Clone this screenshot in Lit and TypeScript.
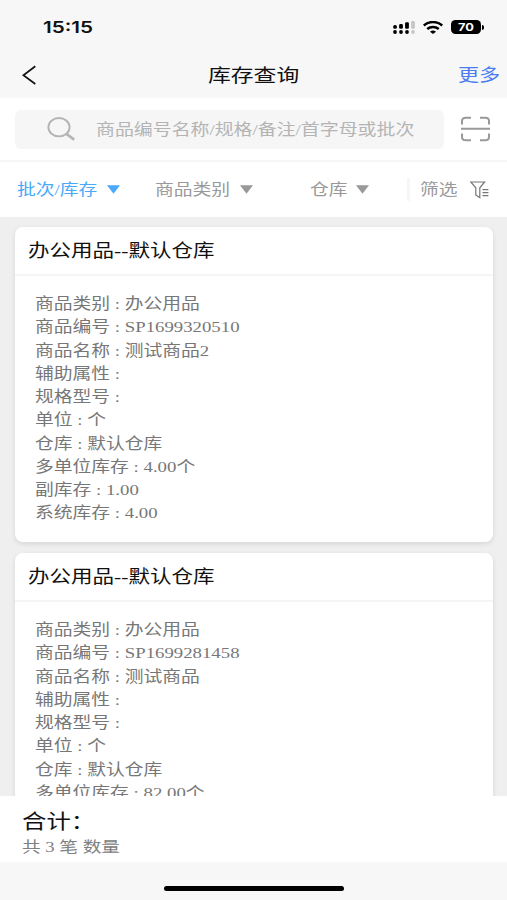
import { LitElement, html, css, svg } from "lit";
import { customElement, property } from "lit/decorators.js";

type Field = [label: string, value: string];
interface Stock {
  title: string;
  fields: Field[];
}

const STOCKS: Stock[] = [
  {
    title: "办公用品--默认仓库",
    fields: [
      ["商品类别", "办公用品"],
      ["商品编号", "SP1699320510"],
      ["商品名称", "测试商品2"],
      ["辅助属性", ""],
      ["规格型号", ""],
      ["单位", "个"],
      ["仓库", "默认仓库"],
      ["多单位库存", "4.00个"],
      ["副库存", "1.00"],
      ["系统库存", "4.00"],
    ],
  },
  {
    title: "办公用品--默认仓库",
    fields: [
      ["商品类别", "办公用品"],
      ["商品编号", "SP1699281458"],
      ["商品名称", "测试商品"],
      ["辅助属性", ""],
      ["规格型号", ""],
      ["单位", "个"],
      ["仓库", "默认仓库"],
      ["多单位库存", "82.00个"],
    ],
  },
];

// Text is set wide: every label is stretched horizontally from its left edge.
const wide = css`
  .wide {
    display: inline-block;
    white-space: nowrap;
    transform: scaleX(1.22);
    transform-origin: left center;
  }
`;

@customElement("stock-card")
export class StockCard extends LitElement {
  @property({ attribute: false }) stock!: Stock;

  static styles = [
    wide,
    css`
      :host {
        display: block;
        flex: none;
        height: 315px;
        background: #fff;
        border-radius: 8px;
        box-shadow: 0 2px 5px rgba(0, 0, 0, 0.1);
      }
      .title {
        height: 46px;
        line-height: 46px;
        padding: 1px 0 0 13px;
        border-bottom: 2px solid #f5f5f5;
        font-size: 17.65px;
        color: #111;
      }
      .fields {
        padding: 16px 0 0 20px;
        font-size: 15.4px;
        color: #777;
      }
      .row {
        height: 23.28px;
        line-height: 23.28px;
      }
    `,
  ];

  render() {
    return html`
      <div class="title"><span class="wide">${this.stock.title}</span></div>
      <div class="fields">
        ${this.stock.fields.map(
          ([label, value]) =>
            html`<div class="row"><span class="wide">${label} : ${value}</span></div>`
        )}
      </div>
    `;
  }
}

const cellular = svg`
  <g fill="#000">
    <circle cx="2" cy="11" r="1.9"/><circle cx="8" cy="11" r="1.9"/><circle cx="14" cy="11" r="1.9"/>
    <rect x="0.2" y="4" width="3.7" height="3.8" rx="1.6"/>
    <rect x="6.1" y="3" width="3.8" height="4.8" rx="1.4"/>
    <rect x="12.1" y="1.2" width="3.8" height="6.6" rx="1.2"/>
  </g>
  <g fill="#c6c6c6"><circle cx="20" cy="11" r="1.9"/><rect x="18.1" y="0" width="3.8" height="7.8" rx="1.2"/></g>`;

@customElement("app-root")
export class AppRoot extends LitElement {
  static styles = [
    wide,
    css`
      :host {
        display: flex;
        flex-direction: column;
        width: 507px;
        height: 900px;
        overflow: hidden;
        background: #efefef;
        font-family: "Liberation Serif", "Noto Sans CJK SC", serif;
      }
      svg {
        display: block;
        flex: none;
      }
      .status {
        flex: none;
        display: flex;
        align-items: center;
        height: 54px;
        padding: 0 23px 0 43px;
        background: #f7f7f7;
      }
      .clock {
        flex: 1;
        font: 600 16.4px/54px Inter, sans-serif;
        color: #111;
      }
      .clock .wide {
        transform: scaleX(1.26);
      }
      .icons {
        display: flex;
        align-items: center;
        gap: 8px;
      }
      .battery {
        display: flex;
        align-items: center;
        gap: 1px;
      }
      .cell {
        width: 30px;
        height: 14px;
        border-radius: 4.5px;
        background: #000;
        color: #fff;
        text-align: center;
        font: 700 10.5px/15px Inter, sans-serif;
      }
      .cell .wide {
        display: block;
        transform-origin: center;
      }
      .tip {
        width: 2px;
        height: 5px;
        border-radius: 0 2px 2px 0;
        background: #000;
      }
      .nav {
        flex: none;
        display: flex;
        align-items: center;
        height: 43px;
        padding: 0 0 1px 22px;
        background: #f7f7f7;
        line-height: 39px;
      }
      .nav svg {
        margin-bottom: 1px;
      }
      .nav .heading {
        width: 250px;
        padding-left: 171px;
        font-size: 18.7px;
        color: #111;
      }
      .nav .more {
        font-size: 17.3px;
        color: #4a7df0;
      }
      .search {
        flex: none;
        display: flex;
        align-items: center;
        gap: 16px;
        height: 62px;
        padding-left: 15px;
        background: #fff;
        border-bottom: 2px solid #f6f6f6;
      }
      .box {
        display: flex;
        align-items: center;
        gap: 20.5px;
        width: 397.5px;
        height: 39px;
        padding-left: 31.5px;
        border-radius: 6px;
        background: #f6f6f6;
        font-size: 15.5px;
        line-height: 39px;
        color: #b4b4b4;
      }
      .filters {
        flex: none;
        display: grid;
        grid-template-columns: 138px 155px 97px 1fr;
        align-items: center;
        height: 55px;
        padding-left: 17px;
        background: #fff;
        font-size: 15.4px;
        line-height: 55px;
        color: #999;
      }
      .filter {
        display: flex;
        align-items: center;
      }
      .active {
        color: #4aa9f8;
      }
      .word5 {
        width: 90px;
      }
      .word4 {
        width: 85px;
      }
      .word2 {
        width: 46px;
      }
      .last {
        border-left: 3px solid #f6f6f6;
        height: 23px;
        line-height: 23px;
        padding-left: 10px;
      }
      .last .word2 {
        width: 50px;
      }
      .list {
        flex: 1;
        min-height: 0;
        overflow: hidden;
        display: flex;
        flex-direction: column;
        gap: 11px;
        padding: 10px 14px 0 14.5px;
      }
      .total {
        flex: none;
        height: 66px;
        padding-left: 21.5px;
        background: #fff;
      }
      .sum {
        padding-top: 11px;
        line-height: 30px;
        font-size: 20px;
        color: #111;
      }
      .count {
        line-height: 20px;
        font-size: 15.3px;
        color: #808080;
      }
      .home {
        flex: none;
        display: flex;
        justify-content: center;
        height: 38px;
        background: #f7f7f7;
      }
      .bar {
        width: 180px;
        height: 5.4px;
        margin: 24px 0 0 1px;
        border-radius: 3px;
        background: #000;
      }
    `,
  ];

  private arrow() {
    return html`<svg width="13" height="9" viewBox="0 0 13 9"><path d="M0 .3H13L6.5 8.7Z" fill="currentColor" /></svg>`;
  }

  render() {
    return html`
      <div class="status">
        <div class="clock"><span class="wide">15:15</span></div>
        <div class="icons">
          <svg width="22" height="13" viewBox="0 0 22 13">${cellular}</svg>
          <svg width="20" height="13" viewBox="0 0 20 13" fill="none" stroke="#000" stroke-width="2.5">
            <path d="M.8 4.5C6-.1 14-.1 19.2 4.5" />
            <path d="M4.2 8C7.5 5.2 12.5 5.2 15.8 8" />
            <path d="M7 10.7Q10 8.5 13 10.7L10 13Z" fill="#000" stroke="none" />
          </svg>
          <div class="battery">
            <div class="cell"><span class="wide">70</span></div>
            <div class="tip"></div>
          </div>
        </div>
      </div>
      <div class="nav">
        <svg width="15" height="20" viewBox="0 0 15 20" fill="none" stroke="#111" stroke-width="1.7">
          <path d="M13.3 1.3L1.4 10.3L13.3 19" />
        </svg>
        <div class="heading"><span class="wide">库存查询</span></div>
        <div class="more"><span class="wide">更多</span></div>
      </div>
      <div class="search">
        <div class="box">
          <svg width="29" height="24" viewBox="0 0 29 24" fill="none" stroke="#b4b4b4">
            <ellipse cx="12" cy="10.2" rx="10.6" ry="9.2" stroke-width="1.9" />
            <path d="M19 16.6L27.2 22.6" stroke-width="2.6" />
          </svg>
          <span class="wide">商品编号名称/规格/备注/首字母或批次</span>
        </div>
        <svg width="31" height="26" viewBox="0 0 31 26" fill="none" stroke="#999" stroke-width="2">
          <path d="M2 8.5V5Q2 1.7 6 1.7H11M20 1.7H25Q29 1.7 29 5V8.5M2 17.5V21Q2 24.3 6 24.3H11M20 24.3H25Q29 24.3 29 21V17.5M1 12.8H30" />
        </svg>
      </div>
      <div class="filters">
        <div class="filter active"><div class="word5"><span class="wide">批次/库存</span></div>${this.arrow()}</div>
        <div class="filter"><div class="word4"><span class="wide">商品类别</span></div>${this.arrow()}</div>
        <div class="filter"><div class="word2"><span class="wide">仓库</span></div>${this.arrow()}</div>
        <div class="filter last">
          <div class="word2"><span class="wide">筛选</span></div>
          <svg width="20" height="18" viewBox="0 0 20 18" fill="none" stroke="#777" stroke-width="1.2">
            <path d="M.8 1H14.6L9.8 6.8V16.6L5.8 14V6.8Z" />
            <path d="M12.5 8.6H18.4M12.5 11.6H18.4M12.5 14.6H18.4" />
          </svg>
        </div>
      </div>
      <div class="list">${STOCKS.map((s) => html`<stock-card .stock=${s}></stock-card>`)}</div>
      <div class="total">
        <div class="sum"><span class="wide">合计：</span></div>
        <div class="count"><span class="wide">共 3 笔 数量</span></div>
      </div>
      <div class="home"><div class="bar"></div></div>
    `;
  }
}
